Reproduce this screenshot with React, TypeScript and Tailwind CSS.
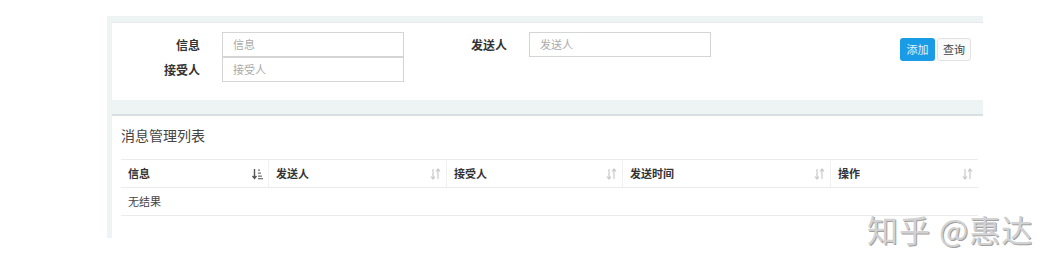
import React from 'react';

const FONT = '"Noto Sans CJK SC", "Liberation Sans", sans-serif';

function SortIcon({ active }: { active?: boolean }) {
  if (active) {
    return (
      <svg width="11" height="12" viewBox="0 0 11 12" className="shrink-0">
        <path d="M2.5 1v9M0.5 8l2 2.5 2-2.5" stroke="#555" strokeWidth="1.4" fill="none" />
        <rect x="6" y="1.5" width="2" height="1.3" fill="#777" />
        <rect x="6" y="4.5" width="3" height="1.3" fill="#777" />
        <rect x="6" y="7.5" width="4" height="1.3" fill="#777" />
        <rect x="6" y="10" width="5" height="1.3" fill="#777" />
      </svg>
    );
  }
  return (
    <svg width="11" height="12" viewBox="0 0 11 12" className="shrink-0">
      <path d="M3 1v9.5M1 8.5l2 2.5 2-2.5" stroke="#c8c8c8" strokeWidth="1.2" fill="none" />
      <path d="M8 11V1.5M6 3.5l2-2.5 2 2.5" stroke="#c8c8c8" strokeWidth="1.2" fill="none" />
    </svg>
  );
}

const columns = [
  { title: '信息', width: 'w-[147px]', active: true },
  { title: '发送人', width: 'w-[178px]' },
  { title: '接受人', width: 'w-[176px]' },
  { title: '发送时间', width: 'w-[208px]' },
  { title: '操作', width: 'w-[148px]' },
];

function Field({ label, placeholder, labelW }: { label: string; placeholder: string; labelW: string }) {
  return (
    <div className="flex items-center">
      <span className={`${labelW} text-right text-[12px] font-bold text-[#333] pr-[22px]`}>{label}</span>
      <div className="w-[182px] h-[25px] border border-[#d5d5d5] bg-white flex items-center pl-[10px] text-[11px] text-[#aaa]">
        {placeholder}
      </div>
    </div>
  );
}

export default function App() {
  return (
    <div className="relative w-[1063px] h-[273px] bg-white overflow-hidden" style={{ fontFamily: FONT }}>
      <div className="ml-[107px] mt-[16px] w-[876px] h-[222px] bg-[#eef3f4] flex flex-col pl-[5px]">
        {/* search panel */}
        <div className="mt-[6px] h-[78px] bg-white border-t border-[#e7eaec] flex items-start pt-[9px]">
          <div className="flex flex-col">
            <Field label="信息" placeholder="信息" labelW="w-[110px]" />
            <Field label="接受人" placeholder="接受人" labelW="w-[110px]" />
          </div>
          <Field label="发送人" placeholder="发送人" labelW="w-[125px]" />
          <div className="ml-auto mr-[12px] mt-[6px] flex gap-[2px]">
            <button className="w-[35px] h-[23px] rounded-[3px] bg-[#1a9be6] text-[#e6f4fd] text-[11px]">添加</button>
            <button className="w-[34px] h-[23px] rounded-[3px] bg-[#fafafa] border border-[#e2e2e2] text-[#444] text-[11px]">查询</button>
          </div>
        </div>

        {/* list panel */}
        <div className="mt-[14px] w-[871px] flex-1 bg-white border-t-2 border-[#d7e0e1] pl-[9px] pr-[5px]">
          <div className="h-[30px] flex items-end text-[14px] text-[#444]">消息管理列表</div>
          <div className="mt-[13px] border-t border-[#ebebeb]">
            <div className="flex h-[28px] border-b border-[#ebebeb]">
              {columns.map((c, i) => (
                <div
                  key={c.title}
                  className={`${c.width} flex items-center justify-between pl-[7px] pr-[5px] text-[11px] font-bold text-[#333] ${i > 0 ? 'border-l border-[#f0f0f0]' : ''}`}
                >
                  <span>{c.title}</span>
                  <SortIcon active={c.active} />
                </div>
              ))}
            </div>
            <div className="h-[28px] flex items-center pl-[7px] border-b border-[#ebebeb] text-[11px] text-[#444]">无结果</div>
          </div>
        </div>
      </div>

      {/* watermark */}
      <div
        className="absolute left-[867px] top-[206px] text-[31px] text-[#d2d2d2] tracking-[1px]"
        style={{ textShadow: '1px 1px 0 #a0a0a0' }}
      >
        知乎 @惠达
      </div>
    </div>
  );
}
